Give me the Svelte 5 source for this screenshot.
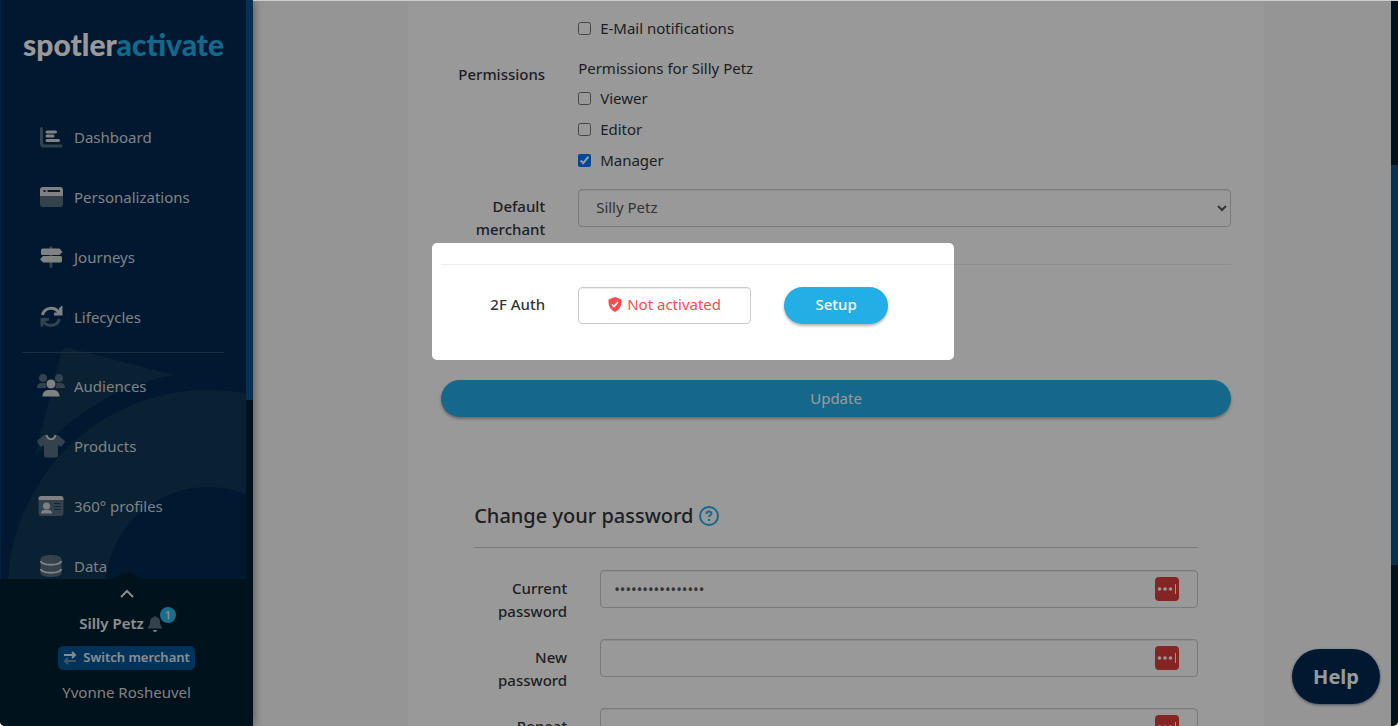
<script>
  const primaryNav = [
    { label: 'Dashboard', icon: 'chart' },
    { label: 'Personalizations', icon: 'window' },
    { label: 'Journeys', icon: 'signs' },
    { label: 'Lifecycles', icon: 'sync' }
  ];
  const secondaryNav = [
    { label: 'Audiences', icon: 'people' },
    { label: 'Products', icon: 'shirt' },
    { label: '360° profiles', icon: 'card' },
    { label: 'Data', icon: 'database' }
  ];
  let roles = $state([
    { id: 'viewer', label: 'Viewer', checked: false },
    { id: 'editor', label: 'Editor', checked: false },
    { id: 'manager', label: 'Manager', checked: true }
  ]);
  let passwords = $state([
    { id: 'current', label: 'Current password', value: 'correcthorsebatt' },
    { id: 'new', label: 'New password', value: '' },
    { id: 'repeat', label: 'Repeat password', value: '' }
  ]);
</script>

{#snippet navIcon(name)}
  <svg class="nav-icon" width="28" height="24" viewBox="0 0 28 24" aria-hidden="true">
    {#if name === 'chart'}
      <path class="soft" d="M3 3.5a1.5 1.5 0 0 1 3 0V18a1.5 1.5 0 0 0 1.500 1.500H24a1.500 1.500 0 0 1 0 3H7a4 4 0 0 1-4-4z" />
      <path class="line" d="M10 7h8.500M10 11h6M10 15.500h11.500" />
    {:else if name === 'window'}
      <path class="soft" d="M3 11h23v8a3 3 0 0 1-3 3H6a3 3 0 0 1-3-3z" />
      <path class="solid" fill-rule="evenodd" d="M6 2h17a3 3 0 0 1 3 3v6H3V5a3 3 0 0 1 3-3zm.500 3v2h2V5zm4 0v2H23V5z" />
    {:else if name === 'signs'}
      <path class="soft" d="M12.500 2.500a1.500 1.500 0 0 1 3 0v19a1.500 1.500 0 0 1-3 0z" />
      <path class="solid" d="M5.500 3.500H22.500L25.500 7l-3 3H5.500a1.500 1.500 0 0 1-1.500-1.500V5a1.500 1.500 0 0 1 1.500-1.500zM6 11h17.500a1.500 1.500 0 0 1 1.500 1.500V16a1.500 1.500 0 0 1-1.500 1.500H6L3 14.200z" />
    {:else if name === 'sync'}
      <path class="curve" d="M5.500 10C7.500 2 18 1 22 8" />
      <path class="solid" d="M23.500 2a1 1 0 0 1 2 0v8.500H17V8.500a1 1 0 0 1 1-1h4V3z" />
      <path class="curve-soft" d="M22.500 14C20 21.500 10.500 22.500 6.500 16.500" />
      <path class="soft" d="M3.500 21.500V13H12v2.500l-5 1-1 5z" />
    {:else if name === 'people'}
      <g class="soft">
        <circle cx="6" cy="4" r="4" /><circle cx="22" cy="4" r="4" />
        <path d="M0 14c0-3.500 1.500-5 4.500-5H9v5zM28 14c0-3.500-1.500-5-4.500-5H19v5z" />
      </g>
      <circle class="solid halo" cx="14" cy="10" r="5" />
      <path class="solid" d="M5.500 22.500c0-4 2.500-6.500 6-6.500h5c3.500 0 6 2.500 6 6.500z" />
    {:else if name === 'shirt'}
      <path class="soft" d="M9 1l-2.500.5L.5 6.500 0 8l3.500 4.500h1.500L7 11v10a2.500 2.500 0 0 0 2.500 2.500h9A2.500 2.500 0 0 0 21 21V11l2 1.500h1.500L28 8l-.500-1.500-6-5L19 1c-2 6-8 6-10 0z" />
      <path class="rim" d="M9.500 1c1.500 5.500 7.500 5.500 9 0" />
    {:else if name === 'card'}
      <path class="soft" d="M1.500 6h25v13a3 3 0 0 1-3 3h-19a3 3 0 0 1-3-3z" />
      <path class="solid" d="M4 2h20a2.500 2.500 0 0 1 2.500 2.500V6h-25V4.500A2.500 2.500 0 0 1 4 2z" />
      <circle class="solid" cx="9.500" cy="12" r="3.500" />
      <path class="solid" d="M4 19.500c0-2.500 1.500-3.500 3.500-3.500h4c2 0 3.500 1 3.500 3.500z" />
      <path class="cut" d="M17.500 9.500H23M17.500 12.500H23M17.500 15.500H23" />
    {:else}
      <path class="soft" d="M3.500 5C3.500-.300 24.500-.300 24.500 5v14c0 5.300-21 5.300-21 0z" />
      <path class="rim" d="M3.500 7c2 5 19 5 21 0M3.500 15c2 5 19 5 21 0" />
    {/if}
  </svg>
{/snippet}

{#snippet navList(items)}
  <ul>
    {#each items as item}
      <li><a href="#{item.icon}">{@render navIcon(item.icon)}<span>{item.label}</span></a></li>
    {/each}
  </ul>
{/snippet}

<div class="app">
  <aside class="sidebar">
    <div class="sidebar-body">
      <svg class="watermark" width="246" height="240" viewBox="0 0 246 240" aria-hidden="true">
        <path d="M61 14q2-6 8-5l105 27q-80 14-139 81z" />
        <path fill-rule="evenodd" d="M8 251a200 200 0 0 1 400 0zM105 251a103 103 0 0 0 206 0a103 103 0 0 0-206 0z" />
      </svg>
      <div class="menu">
        <div class="logo">spotler<span>activate</span></div>
        <nav>
          {@render navList(primaryNav)}
          <hr />
          {@render navList(secondaryNav)}
        </nav>
      </div>
      <div class="track"><div class="thumb"></div></div>
    </div>
    <div class="account">
      <button class="toggle" aria-label="Show account">
        <svg width="14" height="9" viewBox="0 0 14 9"><path d="M1 8l6-6 6 6" /></svg>
      </button>
      <div class="merchant">
        <strong>Silly Petz</strong>
        <span class="bell">
          <svg width="14" height="16" viewBox="0 0 14 16" aria-hidden="true">
            <path class="soft" d="M7 0a1 1 0 0 1 1 1c3 .500 4 2.500 4 5 0 3.500 2 4.500 2 6.500H0C0 10.500 2 9.500 2 6c0-2.500 1-4.500 4-5a1 1 0 0 1 1-1z" />
            <path class="solid" d="M5 14h4a2 2 0 0 1-4 0z" />
          </svg>
          <span class="badge">1</span>
        </span>
      </div>
      <button class="switch">
        <svg width="14" height="14" viewBox="0 0 14 14" aria-hidden="true">
          <path d="M1 4h11M9 1l3 3-3 3" />
          <path class="dim" d="M13 10H2M5 7l-3 3 3 3" />
        </svg>
        Switch merchant
      </button>
      <span class="user">Yvonne Rosheuvel</span>
    </div>
  </aside>

  <main>
    <div class="panel">
      <form class="profile">
        <div class="row">
          <span></span>
          <label class="check"><input type="checkbox" />E-Mail notifications</label>
        </div>
        <div class="row permissions" role="group" aria-labelledby="perm">
          <span class="label" id="perm">Permissions</span>
          <div>
            <p>Permissions for Silly Petz</p>
            {#each roles as role (role.id)}
              <label class="check"><input type="checkbox" bind:checked={role.checked} />{role.label}</label>
            {/each}
          </div>
        </div>
        <div class="row">
          <label class="label" for="merchant">Default merchant</label>
          <select class="field" id="merchant"><option>Silly Petz</option></select>
        </div>
        <hr />
        <div class="row auth">
          <span class="label">2F Auth</span>
          <div class="auth-controls">
            <div class="field status">
              <svg width="14" height="15" viewBox="0 0 14 15" aria-hidden="true">
                <path fill="#ff4b4f" d="M7 0l6.500 2.500C14 8 12 13 7 15 2 13 0 8 .500 2.500z" />
                <path fill="none" stroke="#fff" stroke-width="1.600" d="M4 7.500l2 2 4-4.500" />
              </svg>
              Not activated
            </div>
            <button type="button" class="pill setup">Setup</button>
          </div>
          <div class="spotlight"></div>
        </div>
        <button type="button" class="pill update">Update</button>
      </form>

      <form class="password">
        <h2>
          Change your password
          <svg width="20" height="20" viewBox="0 0 20 20" aria-hidden="true">
            <circle cx="10" cy="10" r="9" />
            <path d="M7.500 8c0-3.300 5-3.300 5-.500 0 1.800-2.500 1.700-2.500 3.500" />
            <path d="M10 13v2" />
          </svg>
        </h2>
        <hr />
        {#each passwords as entry (entry.id)}
          <div class="row">
            <label class="label" for={entry.id}>{entry.label}</label>
            <div class="secret">
              <input class="field" type="password" id={entry.id} bind:value={entry.value} />
              <svg width="24" height="24" viewBox="0 0 24 24" aria-hidden="true">
                <rect width="24" height="24" rx="4" fill="#dd3e3c" />
                <g fill="#fff"><circle cx="4.500" cy="12" r="1.800" /><circle cx="10" cy="12" r="1.800" /><circle cx="15.500" cy="12" r="1.800" /><rect x="20" y="7" width="1" height="10" /></g>
              </svg>
            </div>
          </div>
        {/each}
      </form>
    </div>
  </main>
  <div class="track page-track"><div class="thumb"></div></div>
  <button class="help">Help</button>
</div>

<style>
  :global(body) { margin: 0; }
  .app {
    display: flex;
    height: 100vh;
    overflow: hidden;
    position: relative;
    border-radius: 0 0 5px 5px;
    background: #f9f9f9;
    color: #33353b;
    font: 15px/23px "Noto Sans", "Open Sans", sans-serif;
  }
  .app::after {
    content: "";
    position: absolute;
    z-index: 11;
    inset: 0 0 auto 253px;
    height: 1px;
    background: #ccc;
  }
  .app * { box-sizing: border-box; }
  button, select, input { font: inherit; color: inherit; margin: 0; }
  button { border: 0; cursor: pointer; }
  ul { list-style: none; margin: 0; padding: 0; }

  .sidebar {
    position: relative;
    display: flex;
    flex-direction: column;
    flex: 0 0 253px;
    background: #002b50;
    box-shadow: 0 0 10px rgba(0, 0, 0, 0.5);
    color: #d6d8da;
  }
  .sidebar-body {
    position: relative;
    display: flex;
    flex: 1;
    min-height: 0;
    overflow: hidden;
    border-left: 1px solid #003e70;
  }
  .watermark { position: absolute; left: -1px; bottom: 0; fill: #0f3755; }
  .menu { position: relative; flex: 1; padding: 0 22px 0 21px; }
  .logo {
    height: 107px;
    padding: 26px 0 0 1px;
    font: 900 30px/36px Lato, sans-serif;
    color: #fff;
    white-space: nowrap;
  }
  .logo span { color: #23aee6; }
  .menu a {
    display: flex;
    align-items: center;
    gap: 9px;
    height: 60px;
    padding-left: 15px;
    color: inherit;
    text-decoration: none;
  }
  .menu hr { border: 0; height: 1px; margin: 5px 0 3px; background: #2f4e6a; }
  .nav-icon { flex: none; overflow: visible; }
  .soft { fill: #566e80; }
  .solid { fill: #d6d8da; }
  .line, .curve, .curve-soft, .rim, .cut { fill: none; stroke: #d6d8da; stroke-width: 3; stroke-linecap: round; }
  .curve, .curve-soft { stroke-linecap: butt; }
  .curve-soft { stroke: #566e80; }
  .rim { stroke-width: 2; stroke-linecap: butt; }
  .cut { stroke: #1b3d58; stroke-width: 1; }
  .halo { stroke: #0f3755; stroke-width: 1; }

  .track { flex: 0 0 7px; background: #001e30; }
  .track .thumb { height: 69%; background: #0d5388; }
  .page-track { padding-top: 165px; background: #001e30; }
  .page-track .thumb { height: 400px; }

  .account {
    position: relative;
    display: flex;
    flex-direction: column;
    align-items: center;
    height: 147px;
    background: #001e30;
  }
  .toggle {
    width: 34px;
    height: 34px;
    margin-top: -6px;
    padding: 2px 0 0;
    border-radius: 50%;
    background: #001e30;
  }
  .toggle svg { display: block; margin: 4px auto 0; }
  .toggle path { fill: none; stroke: #e6e6e6; stroke-width: 2; }
  .merchant { display: flex; gap: 4px; margin: 5px 12px 0 0; align-items: center; color: #eee; }
  .merchant strong { font-weight: 600; }
  .bell { position: relative; height: 16px; }
  .bell svg { display: block; }
  .badge {
    position: absolute;
    left: 12px;
    top: -9px;
    width: 16px;
    height: 16px;
    border-radius: 50%;
    background: #2bb8e8;
    font: 600 10px/16px "Noto Sans", sans-serif;
    text-align: center;
  }
  .switch {
    display: flex;
    align-items: center;
    gap: 6px;
    height: 24px;
    margin-top: 11px;
    padding: 0 5px 1px;
    border-radius: 5px;
    background: #005596;
    font-weight: 600;
    font-size: 13px;
    color: #e6ecf0;
  }
  .switch path { fill: none; stroke: #e6ecf0; stroke-width: 2; }
  .switch .dim { stroke: #6490b8; }
  .user { margin-top: 11px; }

  main { flex: 1; min-width: 0; padding: 0 127px 0 155px; }
  .panel { height: 100%; padding: 13px 33px 0; background: #fff; }
  .row { display: grid; grid-template-columns: 104px 1fr; column-gap: 33px; align-items: start; }
  .label { padding-top: 6px; text-align: right; font-weight: 500; }
  .permissions .label, .password .label { padding-top: 7px; }
  .check { display: flex; align-items: center; gap: 9px; height: 31px; width: max-content; }
  .check input { width: 13px; height: 13px; }
  .permissions { margin: 12px 0 13px; }
  p { margin: 0 0 3px; line-height: 24px; }
  .field {
    width: 100%;
    height: 38px;
    padding: 0 13px;
    border: 1px solid #ccc;
    border-radius: 4px;
    background: #fff;
    color: #55575b;
    box-shadow: inset 0 1px 1px rgba(0, 0, 0, 0.075);
  }
  select.field { padding: 0 15px 2px 13px; }
  .profile hr { border: 0; height: 1px; margin: 23px 0 22px; background: #eee; }
  .auth { position: relative; }
  .auth-controls { display: flex; gap: 33px; }
  .status {
    display: flex;
    align-items: center;
    justify-content: center;
    gap: 5px;
    width: 173px;
    height: 37px;
    padding-bottom: 2px;
    color: #ff4b4f;
  }
  .pill {
    height: 37px;
    padding: 0;
    border-radius: 19px;
    background: #23aee6;
    color: #fff;
    box-shadow: 0 2px 3px rgba(0, 0, 0, 0.3);
  }
  .setup { width: 104px; padding-bottom: 2px; font-weight: 500; }
  .update { width: 100%; margin-top: 56px; }
  .spotlight {
    position: absolute;
    z-index: 10;
    left: -9px;
    top: -44px;
    width: 522px;
    height: 117px;
    border-radius: 5px;
    box-shadow: 0 0 0 200vmax rgba(0, 0, 0, 0.4);
    pointer-events: none;
  }

  .password { padding: 0 33px; margin-top: 84px; }
  h2 { display: flex; align-items: center; gap: 5px; margin: 0; font-size: 20px; line-height: 30px; font-weight: 500; }
  h2 svg { fill: none; stroke: #23aee6; stroke-width: 2; }
  .password hr { border: 0; height: 1px; margin: 16px 0 22px; background: #ccc; }
  .password .row { grid-template-columns: 93px 1fr; margin-bottom: 16px; }
  .secret { position: relative; }
  .secret .field { display: block; }
  .secret svg { position: absolute; right: 19px; top: 7px; }

  .help {
    position: absolute;
    right: 18px;
    bottom: 22px;
    width: 88px;
    height: 55px;
    border-radius: 28px;
    background: #002b50;
    color: #fff;
    font-weight: 700;
    font-size: 20px;
    box-shadow: 0 1px 3px rgba(0, 20, 80, 0.5);
  }
</style>
